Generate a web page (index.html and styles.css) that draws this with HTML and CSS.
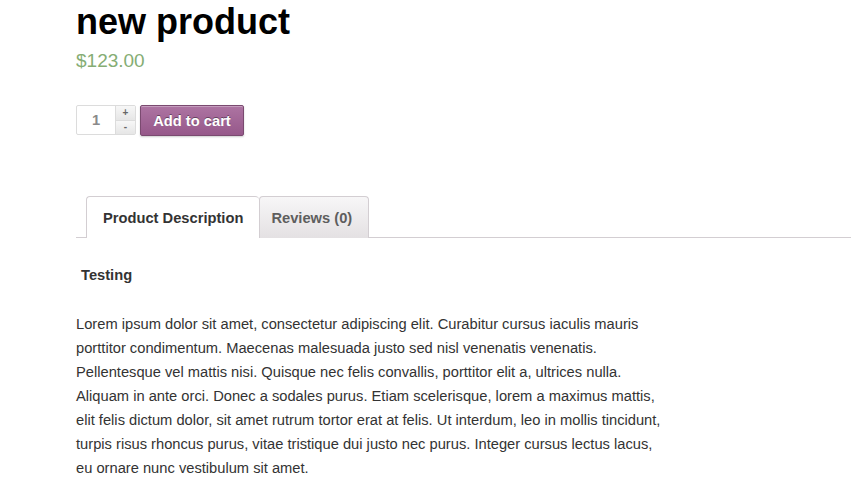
FILE: index.html
```html
<!DOCTYPE html>
<html>
<head>
<meta charset="utf-8">
<link rel="stylesheet" href="styles.css">
</head>
<body>
<div class="page">
  <h1 class="title">new product</h1>
  <p class="price">$123.00</p>
  <form class="cart">
    <div class="qty">
      <span class="qty-input">1</span>
      <span class="qty-btns">
        <span class="qty-btn">+</span>
        <span class="qty-btn">-</span>
      </span>
    </div>
    <button type="button" class="add">Add to cart</button>
  </form>
  <div class="tabs">
    <div class="tab active">Product Description</div>
    <div class="tab reviews">Reviews (0)</div>
  </div>
  <div class="panel">
    <h2 class="sub">Testing</h2>
    <p class="desc">Lorem ipsum dolor sit amet, consectetur adipiscing elit. Curabitur cursus iaculis mauris porttitor condimentum. Maecenas malesuada justo sed nisl venenatis venenatis. Pellentesque vel mattis nisi. Quisque nec felis convallis, porttitor elit a, ultrices nulla. Aliquam in ante orci. Donec a sodales purus. Etiam scelerisque, lorem a maximus mattis, elit felis dictum dolor, sit amet rutrum tortor erat at felis. Ut interdum, leo in mollis tincidunt, turpis risus rhoncus purus, vitae tristique dui justo nec purus. Integer cursus lectus lacus, eu ornare nunc vestibulum sit amet.</p>
  </div>
</div>
</body>
</html>
```
FILE: styles.css
```css
html, body { margin: 0; padding: 0; background: #fff; }
body { font-family: "Liberation Sans", Arial, sans-serif; color: #333; }
.page { padding: 0 0 0 76px; }
.title { margin: 0; padding-top: 2px; font-size: 36px; line-height: 40px; font-weight: bold; color: #000; }
.price { margin: 8px 0 0; font-size: 19px; line-height: 22px; color: #85ad74; }
.cart { display: flex; gap: 4px; margin-top: 33px; height: 30px; }
.qty { display: flex; width: 60px; height: 30px; box-sizing: border-box; border: 1px solid #dcdcdc; border-radius: 2px; background: #fff; }
.qty-input { flex: 1; display: flex; align-items: center; justify-content: center; font-size: 14.7px; font-weight: bold; color: #8a8a8a; }
.qty-btns { display: flex; flex-direction: column; width: 19px; border-left: 1px solid #dcdcdc; }
.qty-btn { flex: 1; display: flex; align-items: center; justify-content: center; font-size: 10px; font-weight: bold; color: #666; background: linear-gradient(#f7f7f7, #e6e6e6); line-height: 1; }
.qty-btn + .qty-btn { border-top: 1px solid #dcdcdc; }
.add { height: 31px; width: 104px; padding: 0; border: 1px solid #7a4a70; border-radius: 2px; background: linear-gradient(#ad74a2, #96588a); color: #fff; font-family: inherit; font-size: 14.7px; font-weight: bold; text-shadow: 0 -1px 0 rgba(0,0,0,.4); box-shadow: inset 0 1px 0 rgba(255,255,255,.3), 0 1px 2px rgba(0,0,0,.2); cursor: pointer; }
.tabs { display: flex; margin-top: 61px; padding-left: 10px; border-bottom: 1px solid #d3ced2; height: 41px; }
.tab { display: flex; align-items: center; padding: 0 16px; box-sizing: border-box; height: 42px; border: 1px solid #d3ced2; border-bottom: none; border-radius: 4px 4px 0 0; background: linear-gradient(#f7f6f7, #e4e1e3); font-size: 14.7px; font-weight: bold; color: #5e5e5e; }
.tab.active { background: #fff; color: #333; position: relative; z-index: 1; border-right: none; }
.tab.reviews { padding: 0 16px 0 11px; }
.panel { padding-top: 29px; }
.sub { margin: 0 0 0 5px; font-size: 14.7px; line-height: 17px; font-weight: bold; color: #333; }
.desc { margin: 28px 0 0; width: 596px; font-size: 14.7px; line-height: 24px; color: #333; }
```
